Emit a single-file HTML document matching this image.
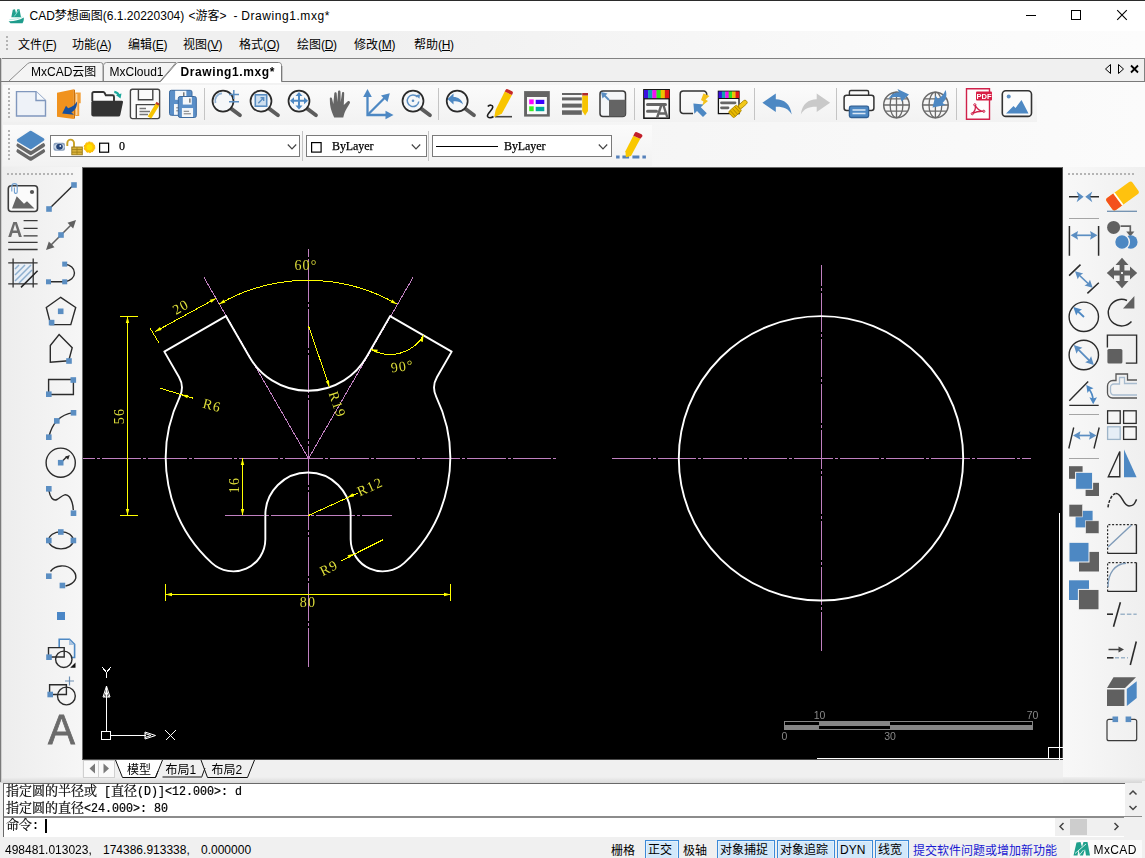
<!DOCTYPE html>
<html lang="zh"><head><meta charset="utf-8"><title>CAD梦想画图</title>
<style>
*{box-sizing:border-box;margin:0;padding:0}
html,body{width:1145px;height:858px;overflow:hidden;background:#f0f0f0}
body{position:relative;font-family:"Liberation Sans","Noto Sans CJK SC",sans-serif;font-size:12px;color:#000}
.abs{position:absolute}
#title{left:0;top:0;width:1145px;height:31px;background:#fff;border-top:1px solid #2b2b2b}
#title .t{left:29.500px;top:7px;font-size:12px;line-height:16px;white-space:nowrap;color:#000}
#title .t i{font-style:normal;letter-spacing:0.56px}
#menu{left:0;top:31px;width:1145px;height:27px;background:linear-gradient(90deg,#f0f0f0 0,#f0f0f0 380px,#fafafa 900px,#fcfcfc 1145px)}
#menu span{position:absolute;top:6px;line-height:16px;font-size:12px;white-space:nowrap}
#menu span b{font-weight:normal;letter-spacing:-0.3px}
#menu u{text-decoration:underline;text-underline-offset:1px}
#tabbar{left:0;top:58px;width:1145px;height:24px;background:#f0f0f0;border-top:1px solid #828282;border-left:1px solid #828282;border-right:1px solid #828282}
#tb1{left:3px;top:85px;width:1034px;height:37px;background:linear-gradient(180deg,#fbfbfb,#f2f2f2)}
#tb2{left:3px;top:125px;width:649px;height:41px;background:linear-gradient(180deg,#fbfbfb,#f2f2f2)}
#toparea{left:0;top:82px;width:1145px;height:86px;background:linear-gradient(90deg,#f0f0f0 0,#f4f4f4 500px,#fbfbfb 1145px)}
#lb{left:0;top:58px;width:2px;height:724px;background:linear-gradient(90deg,#7a7a7a 1px,#cfcfcf 1px)}
#rb{left:1144px;top:58px;width:1px;height:24px;background:#828282}
#left{left:0;top:167px;width:82px;height:612px;background:linear-gradient(90deg,#ededed,#f6f6f6)}
#right{left:1063px;top:167px;width:82px;height:612px;background:linear-gradient(90deg,#f8f8f8,#efefef)}
#canvas{left:82px;top:167px;width:981px;height:593px;background:#000;border:1px solid #4a4a4a;border-left-color:#6a6a6a;border-top-color:#6a6a6a}
#btabs{left:83px;top:760px;width:980px;height:23px;background:linear-gradient(180deg,#f0f0f0 0,#f0f0f0 17px,#d9d9d9 23px)}
#bgrad{left:0;top:777px;width:1145px;height:6px;background:linear-gradient(180deg,#f0f0f0,#d6d6d6)}
#cmd{left:3px;top:783px;width:1142px;height:54px;background:#fff;border-top:1px solid #696969;border-left:1px solid #696969}
#status{left:0;top:837px;width:1145px;height:21px;background:#f0f0f0}
.cad{position:absolute;left:0;top:0}
.sb{position:absolute;top:840px;height:20px;border:1px solid #3c8ad8;background:#d2e8fa;box-shadow:inset 0 0 0 1px #e4f1fc;font-size:12px;line-height:19px;text-align:left;padding-left:2px;white-space:nowrap}
.st.cj{top:842.500px}
.st{position:absolute;top:841.500px;font-size:12px;line-height:17px;white-space:nowrap}
.mono{font-family:"Liberation Mono","Noto Sans CJK SC",monospace;}
.cl{will-change:transform;-webkit-text-stroke:0.2px #000;position:absolute;left:2px;font-size:13px;line-height:17px;height:17px;white-space:pre;font-family:"Liberation Mono","Noto Serif CJK SC",serif;letter-spacing:0}
.cl b{font-weight:normal;font-family:"Liberation Mono",monospace;font-size:11.670px;line-height:17px;display:inline-block;transform:scaleY(1.14);transform-origin:50% 68%}
.combo{position:absolute;height:22px;background:#fff;border:1px solid #7a7a7a}
</style></head>
<body>
<div id="title" class="abs"><div class="t abs">CAD梦想画图(6.1.20220304)</div><div class="t abs" style="left:188.500px">&lt;游客&gt;</div><div class="t abs" style="left:233.500px">-</div><div class="t abs" style="left:241.300px"><i>Drawing1.mxg*</i></div></div>
<div id="menu" class="abs"><span style="left:18px">文件<b>(<u>F</u>)</b></span><span style="left:72px">功能<b>(<u>A</u>)</b></span><span style="left:128px">编辑<b>(<u>E</u>)</b></span><span style="left:183px">视图<b>(<u>V</u>)</b></span><span style="left:239px">格式<b>(<u>O</u>)</b></span><span style="left:297px">绘图<b>(<u>D</u>)</b></span><span style="left:354px">修改<b>(<u>M</u>)</b></span><span style="left:414px">帮助<b>(<u>H</u>)</b></span></div>
<div id="toparea" class="abs"></div>
<div id="tabbar" class="abs"></div>
<div id="tb1" class="abs"></div>
<div id="tb2" class="abs"></div>
<div id="left" class="abs"></div>
<div id="right" class="abs"></div>
<div id="canvas" class="abs"></div>
<div id="bgrad" class="abs"></div>
<div id="btabs" class="abs"></div>
<div id="cmd" class="abs"><div class="cl" style="top:-1px">指定圆的半径或<b> [</b>直径<b>(D)]&lt;12.000&gt;: d</b></div><div class="cl" style="top:15.500px">指定圆的直径<b>&lt;24.000&gt;: 80</b></div><div class="abs" style="left:0;top:32px;width:1139px;height:2px;background:#8c8c8c"></div><div class="cl" style="top:32.500px">命令<b>: </b></div><div class="abs" style="left:41px;top:35px;width:2px;height:14px;background:#000"></div></div>
<div id="status" class="abs"></div>
<div id="lb" class="abs"></div><div id="rb" class="abs"></div>
<div class="st" style="left:5px">498481.013023,</div><div class="st" style="left:103px">174386.913338,</div><div class="st" style="left:201px">0.000000</div>
<div class="st cj" style="left:611px">栅格</div>
<div class="sb" style="left:645px;width:34px">正交</div>
<div class="st cj" style="left:683px">极轴</div>
<div class="sb" style="left:717px;width:58px">对象捕捉</div>
<div class="sb" style="left:777px;width:58px">对象追踪</div>
<div class="sb" style="left:837px;width:36px">DYN</div>
<div class="sb" style="left:875px;width:34px">线宽</div>
<div class="st cj" style="left:913px;color:#1a1ad2">提交软件问题或增加新功能</div>
<svg class="cad" width="1145" height="858" viewBox="0 0 1145 858">
<g fill="none" stroke="#c080c0" stroke-width="1" shape-rendering="crispEdges">
<path d="M83 458.5H558" stroke-dashoffset="26.2" stroke-dasharray="38.6 2 3 2"/>
<path d="M308.5 667V249" stroke-dasharray="38.6 2 3 2"/>
<path d="M225 515.5H392" stroke-dasharray="38.6 2 3 2"/>
<path d="M612 458.5H1030.5" stroke-dasharray="38.6 2 3 2"/>
<path d="M821.5 651V265" stroke-dasharray="38.6 2 3 2"/>
</g>
<g fill="none" stroke="#c080c0" stroke-width="1" shape-rendering="crispEdges">
<path d="M308.5 458.5L204 277.5 M308.5 458.5L413 277.5"/>
</g>
<g fill="none" stroke="#ffffff" stroke-width="1.900" stroke-linejoin="round">
<path d="M249.5 356.98 A67.55 67.55 0 0 0 366.5 356.98 L390.1 316.1 L451.67 351.65 L437.03 377.02 A21.33 21.33 0 0 0 436.26 396.9 A142.2 142.2 0 0 1 404.33 562.9 A32 32 0 0 1 350.66 539.37 L350.66 515.18 A42.66 42.66 0 0 0 265.34 515.18 L265.34 539.37 A32 32 0 0 1 211.67 562.9 A142.2 142.2 0 0 1 179.74 396.9 A21.33 21.33 0 0 0 178.97 377.02 L164.33 351.65 L225.9 316.1 Z"/>
<circle cx="821" cy="458.3" r="142.2"/>
</g>
<g fill="none" stroke="#ffff00" stroke-width="1" shape-rendering="crispEdges">
<path d="M219 304.15 A178 178 0 0 1 397 304.15"/>
<path d="M155 331.7L216.3 298.2"/>
<path d="M150 328L159 343"/>
<path d="M127.5 316V515 M120 316.5H138 M120 515.5H138" shape-rendering="crispEdges"/>
<path d="M242.5 458V515" shape-rendering="crispEdges"/>
<path d="M165 594.5H451 M165.5 584V601 M450.5 584V601" shape-rendering="crispEdges"/>
<path d="M160 388.2L193.5 398.3"/>
<path d="M308.5 326L329.5 387"/>
<path d="M308.5 515.5L358 493"/>
<path d="M383 539.7L341.4 560.7"/>
<path d="M371.1 349.3 A38.4 38.4 0 0 0 423.5 335.2"/>
</g>
<path d="M219 304.15 L223.79 299.43 L225.48 302.38 Z" fill="#ffff00" stroke="none"/>
<path d="M397 304.15 L390.52 302.38 L392.21 299.43 Z" fill="#ffff00" stroke="none"/>
<path d="M155 331.7 L159.87 327.07 L161.51 330.05 Z" fill="#ffff00" stroke="none"/>
<path d="M216.3 298.2 L211.43 302.83 L209.79 299.85 Z" fill="#ffff00" stroke="none"/>
<path d="M127.5 316.5 L129.2 323 L125.8 323 Z" fill="#ffff00" stroke="none"/>
<path d="M127.5 515.5 L125.8 509 L129.2 509 Z" fill="#ffff00" stroke="none"/>
<path d="M242.5 458.5 L244.2 465 L240.8 465 Z" fill="#ffff00" stroke="none"/>
<path d="M242.5 515.5 L240.8 509 L244.2 509 Z" fill="#ffff00" stroke="none"/>
<path d="M165.5 594.5 L172 592.8 L172 596.2 Z" fill="#ffff00" stroke="none"/>
<path d="M450.5 594.5 L444 596.2 L444 592.8 Z" fill="#ffff00" stroke="none"/>
<path d="M181.5 394.7 L188.21 394.95 L187.23 398.21 Z" fill="#ffff00" stroke="none"/>
<path d="M329.5 387 L325.74 381.43 L328.95 380.3 Z" fill="#ffff00" stroke="none"/>
<path d="M347.3 497.6 L352.51 493.36 L353.92 496.46 Z" fill="#ffff00" stroke="none"/>
<path d="M354.1 553.8 L349.06 558.24 L347.53 555.21 Z" fill="#ffff00" stroke="none"/>
<path d="M371.1 349.3 L377.81 349.64 L376.79 352.88 Z" fill="#ffff00" stroke="none"/>
<path d="M423.5 335.2 L422.83 341.88 L419.64 340.7 Z" fill="#ffff00" stroke="none"/>
<text x="306" y="270" font-family="'Liberation Serif',serif" font-size="14" letter-spacing="1.2" fill="#dede3a" text-anchor="middle">60&#176;</text>
<text x="183" y="311" font-family="'Liberation Serif',serif" font-size="14" letter-spacing="1.2" fill="#dede3a" text-anchor="middle" transform="rotate(-30 183 311)">20</text>
<text x="403" y="371" font-family="'Liberation Serif',serif" font-size="14" letter-spacing="1.2" fill="#dede3a" text-anchor="middle" transform="rotate(-8 403 371)">90&#176;</text>
<text x="124" y="416" font-family="'Liberation Serif',serif" font-size="14" letter-spacing="1.2" fill="#dede3a" text-anchor="middle" transform="rotate(-90 124 416)">56</text>
<text x="211" y="410" font-family="'Liberation Serif',serif" font-size="14" letter-spacing="1.2" fill="#dede3a" text-anchor="middle" transform="rotate(15 211 410)">R6</text>
<text x="333" y="406" font-family="'Liberation Serif',serif" font-size="14" letter-spacing="1.2" fill="#dede3a" text-anchor="middle" transform="rotate(71 333 406)">R19</text>
<text x="239" y="485" font-family="'Liberation Serif',serif" font-size="14" letter-spacing="1.2" fill="#dede3a" text-anchor="middle" transform="rotate(-90 239 485)">16</text>
<text x="372" y="491" font-family="'Liberation Serif',serif" font-size="14" letter-spacing="1.2" fill="#dede3a" text-anchor="middle" transform="rotate(-24 372 491)">R12</text>
<text x="331" y="572" font-family="'Liberation Serif',serif" font-size="14" letter-spacing="1.2" fill="#dede3a" text-anchor="middle" transform="rotate(-27 331 572)">R9</text>
<text x="308" y="607" font-family="'Liberation Serif',serif" font-size="14" letter-spacing="1.2" fill="#dede3a" text-anchor="middle">80</text>
<g fill="none" stroke="#ffffff" stroke-width="1" shape-rendering="crispEdges">
<path d="M101.5 731.5h9v8h-9z M106.5 731V686 M110 735.5H146"/>
<path d="M102.500 667.5L106.5 672.5L110.500 667.5 M106.5 672.500V678"/>
<path d="M165.5 730.5L175.5 740.5 M175.5 730.5L165.5 740.5"/>
</g>
<g fill="none" stroke="#ffffff" stroke-width="1">
<path d="M106.5 686L103 697H110Z M106.5 690L104.500 697 M106.5 690L108.500 697"/>
<path d="M155.5 735.5L145 732V739Z M151 735.5L145 733.5 M151 735.5L145 737.5"/>
</g>
<g shape-rendering="crispEdges">
<rect x="784.5" y="721.5" width="248" height="8" fill="none" stroke="#858585"/>
<rect x="784" y="725" width="35" height="5" fill="#858585"/>
<rect x="819" y="721" width="71" height="5" fill="#858585"/>
<rect x="890" y="725" width="143" height="5" fill="#858585"/>
</g>
<text x="819.5" y="718.5" font-family="'Liberation Sans',sans-serif" font-size="10.500" fill="#888888" text-anchor="middle">10</text>
<text x="1032.5" y="718.5" font-family="'Liberation Sans',sans-serif" font-size="10.500" fill="#888888" text-anchor="middle">70</text>
<text x="784.5" y="740" font-family="'Liberation Sans',sans-serif" font-size="10.500" fill="#888888" text-anchor="middle">0</text>
<text x="890" y="740" font-family="'Liberation Sans',sans-serif" font-size="10.500" fill="#888888" text-anchor="middle">30</text>
<g fill="none" stroke="#ffffff" stroke-width="1" shape-rendering="crispEdges">
<path d="M1059.5 513V760 M817 758.5H1063 M1048.500 758V747.500H1063"/>
</g>
</svg>
<style>.ic{position:absolute;overflow:visible}.sep{position:absolute;background:#a5a5a5}.grip{position:absolute;height:2px;background-image:linear-gradient(90deg,#b4b4b4 2px,transparent 2px);background-size:4px 2px}.gripv{position:absolute;width:2px;background-image:linear-gradient(180deg,#b4b4b4 2px,transparent 2px);background-size:2px 4px}</style>
<svg class="ic" style="left:45px;top:181px" width="32" height="32" viewBox="0 0 32 32"><path d="M4 28L29 3.5" fill="none" stroke="#2b2b2b" stroke-width="1.4" /><rect x="26.2" y="1.2" width="5.6" height="5.6" fill="#5b8ec2"/><rect x="1.2" y="25.2" width="5.6" height="5.6" fill="#5b8ec2"/></svg>
<svg class="ic" style="left:45px;top:219px" width="32" height="32" viewBox="0 0 32 32"><path d="M6 26L26 6" fill="none" stroke="#606060" stroke-width="1.6" /><path d="M31.00 1.00L28.17 9.49L25.34 6.66L22.51 3.83Z" fill="#606060"/><path d="M1.00 31.00L3.83 22.51L6.66 25.34L9.49 28.17Z" fill="#606060"/><rect x="13.2" y="13.2" width="5.6" height="5.6" fill="#5b8ec2"/></svg>
<svg class="ic" style="left:45px;top:257px" width="32" height="32" viewBox="0 0 32 32"><path d="M3 24.7H20A10.600 8.800 0 0 0 20 7.200" fill="none" stroke="#2b2b2b" stroke-width="1.4" /><rect x="17.2" y="4.6" width="5" height="5" fill="#5b8ec2"/><rect x="1" y="22.3" width="5" height="5" fill="#5b8ec2"/><rect x="17.2" y="22.3" width="5" height="5" fill="#5b8ec2"/></svg>
<svg class="ic" style="left:45px;top:295px" width="32" height="32" viewBox="0 0 32 32"><path d="M15.7 2.3L30.7 12.5L25.8 29.6H5.7L1.3 12.5Z" fill="none" stroke="#2b2b2b" stroke-width="1.4" /><rect x="12.899999999999999" y="13.5" width="5.6" height="5.6" fill="#5b8ec2"/><rect x="3.8000000000000003" y="24.8" width="5.6" height="5.6" fill="#5b8ec2"/></svg>
<svg class="ic" style="left:45px;top:333px" width="32" height="32" viewBox="0 0 32 32"><path d="M14.1 1.6L27.2 14.7L23.7 27.8L5.3 29.2V12.6Z" fill="none" stroke="#2b2b2b" stroke-width="1.4" /><rect x="21.2" y="25.2" width="5.6" height="5.6" fill="#5b8ec2"/></svg>
<svg class="ic" style="left:45px;top:371px" width="32" height="32" viewBox="0 0 32 32"><path d="M3.6 8.5H28.4V23.5H3.6Z" fill="none" stroke="#2b2b2b" stroke-width="1.4" /><rect x="25.5" y="6.2" width="5.6" height="5.6" fill="#5b8ec2"/><rect x="1.0" y="20.4" width="5.6" height="5.6" fill="#5b8ec2"/></svg>
<svg class="ic" style="left:45px;top:409px" width="32" height="32" viewBox="0 0 32 32"><path d="M28.3 3.6C16 5.5 7 14 3.9 28" fill="none" stroke="#2b2b2b" stroke-width="1.4" /><rect x="25.7" y="1.0" width="5.6" height="5.6" fill="#5b8ec2"/><rect x="9.0" y="9.1" width="5.6" height="5.6" fill="#5b8ec2"/><rect x="1.0" y="25.4" width="5.6" height="5.6" fill="#5b8ec2"/></svg>
<svg class="ic" style="left:45px;top:447px" width="32" height="32" viewBox="0 0 32 32"><circle cx="15.7" cy="15.7" r="14.6" fill="none" stroke="#2b2b2b" stroke-width="1.4"/><path d="M16 15.5L22 9.5" fill="none" stroke="#2b2b2b" stroke-width="1.4" /><path d="M24.80 8.00L23.17 12.74L21.62 11.18L20.06 9.63Z" fill="#2b2b2b"/><rect x="12.899999999999999" y="12.899999999999999" width="5.6" height="5.6" fill="#5b8ec2"/></svg>
<svg class="ic" style="left:45px;top:485px" width="32" height="32" viewBox="0 0 32 32"><path d="M4 6C5 12 8 16.5 12 14.5S20 6.5 24.5 12Q28 17 28.3 25" fill="none" stroke="#2b2b2b" stroke-width="1.4" /><rect x="1.0" y="1.0" width="5.6" height="5.6" fill="#5b8ec2"/><rect x="25.7" y="25.4" width="5.6" height="5.6" fill="#5b8ec2"/></svg>
<svg class="ic" style="left:45px;top:523px" width="32" height="32" viewBox="0 0 32 32"><ellipse cx="16" cy="17.3" rx="12.3" ry="8.6" fill="none" stroke="#2b2b2b" stroke-width="1.4"/><rect x="13.0" y="6.2" width="5.6" height="5.6" fill="#5b8ec2"/><rect x="1.0" y="14.7" width="5.6" height="5.6" fill="#5b8ec2"/><rect x="25.599999999999998" y="14.7" width="5.6" height="5.6" fill="#5b8ec2"/></svg>
<svg class="ic" style="left:45px;top:561px" width="32" height="32" viewBox="0 0 32 32"><path d="M5.5 10.5C10 3.5 22 3 28 9.500S30 23 20.5 25" fill="none" stroke="#2b2b2b" stroke-width="1.4" /><rect x="1.0" y="12.399999999999999" width="5.6" height="5.6" fill="#5b8ec2"/><rect x="14.6" y="21.7" width="5.6" height="5.6" fill="#5b8ec2"/></svg>
<svg class="ic" style="left:45px;top:599px" width="32" height="32" viewBox="0 0 32 32"><rect x="12" y="13" width="8" height="8" fill="#4a86c6"/></svg>
<svg class="ic" style="left:45px;top:637px" width="32" height="32" viewBox="0 0 32 32"><path d="M14.2 10V2.3H24.5L29.6 7.4V20.5H27" fill="none" stroke="#4d88c3" stroke-width="1.6" /><path d="M24 2.3V8H29.6Z" fill="#a9c4e0" /><path d="M3.5 10.6H19.2V20H3.5Z" fill="none" stroke="#2b2b2b" stroke-width="1.4" /><circle cx="18.8" cy="22.3" r="8.2" fill="none" stroke="#2b2b2b" stroke-width="1.4"/><rect x="1.2" y="17.4" width="5.6" height="5.6" fill="#5b8ec2"/><path d="M30.5 25.4V30.7H25.2Z" fill="#111" /></svg>
<svg class="ic" style="left:45px;top:675px" width="32" height="32" viewBox="0 0 32 32"><path d="M4.6 9.8H21.4V19.5H4.6Z" fill="none" stroke="#2b2b2b" stroke-width="1.4" /><circle cx="21.4" cy="21" r="8.9" fill="none" stroke="#2b2b2b" stroke-width="1.4"/><rect x="2.4000000000000004" y="16.7" width="5.6" height="5.6" fill="#5b8ec2"/><path d="M24.5 1.500V10.5M20 6H29" fill="none" stroke="#6d8fb3" stroke-width="1.2" /></svg>
<svg class="ic" style="left:45px;top:713px" width="32" height="32" viewBox="0 0 32 32"><text x="16.500" y="30.600" text-anchor="middle" font-family="'Liberation Sans',sans-serif" font-size="42.500" fill="#6b6b6b" stroke="#6b6b6b" stroke-width="0.8" transform="translate(16.500 0) scale(0.950 1) translate(-16.500 0)">A</text></svg>
<svg class="ic" style="left:7px;top:181px" width="32" height="32" viewBox="0 0 32 32"><rect x="1.3" y="4.7" width="29.2" height="25.8" rx="3" fill="#fbfbfb" stroke="#3c3c3c" stroke-width="1.600"/><path d="M5 27.500L9.700 15.300L17 22.700L20 20.300L27.500 27.500Z" fill="#666" /><circle cx="25" cy="11" r="2.1" fill="#555"/><path d="M4.800 10.500V5.300a2.700 2.700 0 0 1 5.400 0V11a1.400 1.400 0 0 1-2.800 0V6.500" fill="none" stroke="#6f9fd0" stroke-width="1.1" /></svg>
<svg class="ic" style="left:7px;top:219px" width="32" height="32" viewBox="0 0 32 32"><text x="8.100" y="18.200" text-anchor="middle" font-family="'Liberation Sans',sans-serif" font-size="22.500" font-weight="bold" fill="#6b6b6b" transform="translate(8.100 0) scale(0.900 1) translate(-8.100 0)">A</text><path d="M16.6 1.7H30.6M16.6 9.3H30.6M16.6 16.8H30.6M1.2 23.4H30.6M1.2 30.500H30.6" fill="none" stroke="#3a3a3a" stroke-width="1.3" /></svg>
<svg class="ic" style="left:7px;top:257px" width="32" height="32" viewBox="0 0 32 32"><rect x="6.1" y="5.900" width="20" height="21" fill="#e9eff6"/><path d="M8 18L18 8M8 24L24 8M12 26L25 13M8 12L12 8" fill="none" stroke="#8fb0cf" stroke-width="1.5" /><path d="M6.1 1.5V30.4M26.2 1.500V30.4M1.2 5.9H30.6M1.2 26.9H30.6" fill="none" stroke="#333" stroke-width="1.3" /><path d="M14 30.4L30.6 13.8" fill="none" stroke="#222" stroke-width="1.5" /></svg>
<svg class="ic" style="left:1068px;top:181px" width="32" height="32" viewBox="0 0 32 32"><path d="M1 15.800H11M22 15.800H31" fill="none" stroke="#2b2b2b" stroke-width="1.6" /><path d="M15.60 15.80L8.60 21.20L10.60 15.80L8.60 10.40Z" fill="#5b8ec2"/><path d="M17.30 15.80L24.30 10.40L22.30 15.80L24.30 21.20Z" fill="#5b8ec2"/></svg>
<svg class="ic" style="left:1068px;top:225px" width="32" height="32" viewBox="0 0 32 32"><path d="M1.4 1V30.700M30.600 1V30.700" fill="none" stroke="#2b2b2b" stroke-width="1.5" /><path d="M5.60 10.30L26.50 10.30" fill="none" stroke="#5b8ec2" stroke-width="1.7" /><path d="M2.60 10.30L10.10 5.90L8.90 10.30L10.10 14.70Z" fill="#5b8ec2"/><path d="M29.50 10.30L22.00 14.70L23.20 10.30L22.00 5.90Z" fill="#5b8ec2"/></svg>
<svg class="ic" style="left:1068px;top:263px" width="32" height="32" viewBox="0 0 32 32"><path d="M1.1 12.600L12.500 1.600M19.400 30.400L30.800 19.700" fill="none" stroke="#2b2b2b" stroke-width="1.5" /><path d="M9.19 10.25L22.51 22.75" fill="none" stroke="#5b8ec2" stroke-width="1.7" /><path d="M7.00 8.20L15.21 10.41L11.60 12.51L9.73 16.25Z" fill="#5b8ec2"/><path d="M24.70 24.80L16.49 22.59L20.10 20.49L21.97 16.75Z" fill="#5b8ec2"/></svg>
<svg class="ic" style="left:1068px;top:301px" width="32" height="32" viewBox="0 0 32 32"><circle cx="15.8" cy="15.8" r="14.7" fill="none" stroke="#2b2b2b" stroke-width="1.4"/><path d="M16 16L9 9.5" fill="none" stroke="#4d88c3" stroke-width="1.8" /><path d="M5.30 6.00L13.99 8.46L10.23 10.68L8.21 14.55Z" fill="#4d88c3"/></svg>
<svg class="ic" style="left:1068px;top:339px" width="32" height="32" viewBox="0 0 32 32"><circle cx="15.8" cy="16" r="14.7" fill="none" stroke="#2b2b2b" stroke-width="1.4"/><path d="M7.92 8.12L23.68 23.88" fill="none" stroke="#5b8ec2" stroke-width="1.8" /><path d="M5.80 6.00L14.43 8.69L10.61 10.81L8.49 14.63Z" fill="#5b8ec2"/><path d="M25.80 26.00L17.17 23.31L20.99 21.19L23.11 17.37Z" fill="#5b8ec2"/></svg>
<svg class="ic" style="left:1068px;top:377px" width="32" height="32" viewBox="0 0 32 32"><path d="M1.3 23.7L20.2 4.4M1.3 28.4H30.7" fill="none" stroke="#2b2b2b" stroke-width="1.4" /><path d="M20.5 11.5Q25 17 25 23" fill="none" stroke="#4d88c3" stroke-width="1.7" /><path d="M18.30 8.00L25.54 11.32L21.78 12.64L19.46 15.88Z" fill="#4d88c3"/><path d="M25.20 27.30L21.40 20.30L25.20 21.50L29.00 20.30Z" fill="#4d88c3"/></svg>
<svg class="ic" style="left:1068px;top:421px" width="32" height="32" viewBox="0 0 32 32"><path d="M0.8 27.5L5.7 6.5M26 27.5L31.2 6.5" fill="none" stroke="#2b2b2b" stroke-width="1.4" /><path d="M8.00 14.50L25.50 14.50" fill="none" stroke="#5b8ec2" stroke-width="1.7" /><path d="M5.00 14.50L12.50 10.30L11.30 14.50L12.50 18.70Z" fill="#5b8ec2"/><path d="M28.50 14.50L21.00 18.70L22.20 14.50L21.00 10.30Z" fill="#5b8ec2"/></svg>
<svg class="ic" style="left:1068px;top:465px" width="32" height="32" viewBox="0 0 32 32"><path d="M1 1.2H14.6V13.800H1Z" fill="#606060" /><path d="M17.6 17.800H31V31H17.6Z" fill="#606060" /><rect x="7.6" y="7.3" width="17" height="17" fill="#4d88c3" stroke="#f4f4f4" stroke-width="1"/></svg>
<svg class="ic" style="left:1068px;top:503px" width="32" height="32" viewBox="0 0 32 32"><rect x="7.6" y="7.8" width="17" height="16.600" fill="#4d88c3"/><rect x="1" y="1.3" width="13.6" height="12.6" fill="#606060" stroke="#f4f4f4" stroke-width="0.6"/><rect x="17.6" y="17.8" width="13.4" height="12.700" fill="#606060" stroke="#f4f4f4" stroke-width="0.6"/></svg>
<svg class="ic" style="left:1068px;top:541px" width="32" height="32" viewBox="0 0 32 32"><path d="M11 10.9H31V30.500H11Z" fill="#606060" /><rect x="1" y="1.3" width="20" height="19.7" fill="#4d88c3" stroke="#f4f4f4" stroke-width="1"/></svg>
<svg class="ic" style="left:1068px;top:579px" width="32" height="32" viewBox="0 0 32 32"><path d="M1 1.3H21V21H1Z" fill="#4d88c3" /><rect x="10.4" y="10.4" width="20.6" height="20.4" fill="#606060" stroke="#f4f4f4" stroke-width="1"/></svg>
<svg class="ic" style="left:1106px;top:181px" width="32" height="32" viewBox="0 0 32 32"><g transform="rotate(-36 16.500 15)"><rect x="0.500" y="7.500" width="32" height="15" rx="2.800" fill="#ffc20e"/><path d="M0.500 10.300a2.800 2.800 0 0 1 2.800-2.800H10.500V22.500H3.300a2.800 2.800 0 0 1-2.800-2.800Z" fill="#f4511e"/><rect x="10.500" y="7.500" width="1.800" height="15" fill="#fff"/></g><path d="M1 30.3H31" fill="none" stroke="#6f8fae" stroke-width="1.3" /></svg>
<svg class="ic" style="left:1106px;top:219px" width="32" height="32" viewBox="0 0 32 32"><circle cx="7.6" cy="8.4" r="6.5" fill="#606060"/><path d="M14.5 7.2H24.3V13" fill="none" stroke="#606060" stroke-width="1.7" /><path d="M20.2 12.5H28.400L24.3 17.6Z" fill="#606060" /><circle cx="24.800" cy="23" r="6.800" fill="#4d88c3"/><circle cx="16" cy="23" r="7.400" fill="#4d88c3" stroke="#f4f4f4" stroke-width="1.400"/></svg>
<svg class="ic" style="left:1106px;top:257px" width="32" height="32" viewBox="0 0 32 32"><path d="M16 0.800L22.500 8H18.400V13.600H24V9.500L31.200 16L24 22.500V18.400H18.400V24H22.500L16 31.200L9.500 24H13.600V18.400H8V22.500L0.800 16L8 9.500V13.600H13.600V8H9.500Z" fill="#606060" /><rect x="15" y="15" width="2" height="2" fill="#e8e8e8"/></svg>
<svg class="ic" style="left:1106px;top:295px" width="32" height="32" viewBox="0 0 32 32"><path d="M21 5.500A13.300 13.300 0 1 0 25.500 26.500" fill="none" stroke="#2b2b2b" stroke-width="1.4" /><path d="M28.4 1V13.500H17Z" fill="#606060" /></svg>
<svg class="ic" style="left:1106px;top:333px" width="32" height="32" viewBox="0 0 32 32"><path d="M1.4 14.5V2.1H30.6V30.1H19.800" fill="none" stroke="#2b2b2b" stroke-width="1.4" /><rect x="1.4" y="16.100" width="15" height="14.400" rx="1.5" fill="#606060"/></svg>
<svg class="ic" style="left:1106px;top:371px" width="32" height="32" viewBox="0 0 32 32"><path d="M31 9H21.500V3H10V9.500H7A5.500 5.500 0 0 0 1.5 15V22A5 5 0 0 0 6.500 27H31" fill="none" stroke="#555" stroke-width="1.3" /><path d="M31 12.5H18.5V6.5H13.500V13H8A3.500 3.500 0 0 0 4.5 16.500V20.500A3.500 3.500 0 0 0 8 24H31" fill="none" stroke="#a8bccf" stroke-width="1.3" /></svg>
<svg class="ic" style="left:1106px;top:409px" width="32" height="32" viewBox="0 0 32 32"><rect x="1.6" y="1.8" width="12.600" height="12.600" fill="#f6f6f6" stroke="#2b2b2b" stroke-width="1.300"/><rect x="17.600" y="1.8" width="12.600" height="12.600" fill="#f6f6f6" stroke="#2b2b2b" stroke-width="1.300"/><rect x="1.6" y="17.800" width="12.600" height="12.600" fill="#e6eef6" stroke="#9db4c8" stroke-width="1.300"/><rect x="17.600" y="17.800" width="12.600" height="12.600" fill="#f6f6f6" stroke="#2b2b2b" stroke-width="1.300"/></svg>
<svg class="ic" style="left:1106px;top:447px" width="32" height="32" viewBox="0 0 32 32"><path d="M2.3 29.700H13.800V4.5Z" fill="none" stroke="#2b2b2b" stroke-width="1.4" /><path d="M18 2.600V30.2H30.6Z" fill="#4d88c3" /></svg>
<svg class="ic" style="left:1106px;top:485px" width="32" height="32" viewBox="0 0 32 32"><path d="M2 22.3C3 15 6 9 10 8.500" fill="none" stroke="#2b2b2b" stroke-width="1.5" stroke-dasharray="3 1.5"/><path d="M10 8.500C16 8 17 21 23 21S29 17 30.6 14.4" fill="none" stroke="#2b2b2b" stroke-width="1.5" /></svg>
<svg class="ic" style="left:1106px;top:523px" width="32" height="32" viewBox="0 0 32 32"><path d="M1.6 30.400V1.600H30.400" fill="none" stroke="#2b2b2b" stroke-width="1.2" stroke-dasharray="2 1.700"/><path d="M30.400 1.600V30.400H1.600" fill="none" stroke="#2b2b2b" stroke-width="1.4" /><path d="M2 24L25.500 2" fill="none" stroke="#7f9bb8" stroke-width="1.4" /></svg>
<svg class="ic" style="left:1106px;top:561px" width="32" height="32" viewBox="0 0 32 32"><path d="M1.6 30.400V1.600H30.400" fill="none" stroke="#2b2b2b" stroke-width="1.2" stroke-dasharray="2 1.700"/><path d="M30.400 1.600V30.400H1.600" fill="none" stroke="#2b2b2b" stroke-width="1.4" /><path d="M2 26C2 12 9 3 20 2.300" fill="none" stroke="#7f9bb8" stroke-width="1.4" /></svg>
<svg class="ic" style="left:1106px;top:599px" width="32" height="32" viewBox="0 0 32 32"><path d="M7.500 27.700L14.400 3.300" fill="none" stroke="#2b2b2b" stroke-width="1.6" /><path d="M1 15.200H7" fill="none" stroke="#2b2b2b" stroke-width="1.6" /><path d="M14.400 15.200H30.700" fill="none" stroke="#9db4c8" stroke-width="1.6" stroke-dasharray="4.500 2"/></svg>
<svg class="ic" style="left:1106px;top:637px" width="32" height="32" viewBox="0 0 32 32"><path d="M24.300 28L30.300 4.500" fill="none" stroke="#2b2b2b" stroke-width="1.6" /><path d="M2.500 12.500H14" fill="none" stroke="#444" stroke-width="1.5" /><path d="M12.500 9.500L18 12.500L12.500 15.500Z" fill="#444" /><path d="M1 20.800H7.500" fill="none" stroke="#2b2b2b" stroke-width="1.6" /><path d="M9 20.800H22" fill="none" stroke="#9db4c8" stroke-width="1.6" stroke-dasharray="4 2"/></svg>
<svg class="ic" style="left:1106px;top:675px" width="32" height="32" viewBox="0 0 32 32"><path d="M1 13.100L7.500 2.200H30L19 13.100Z" fill="#606060" /><path d="M1 14.500H18.400V31H1Z" fill="#606060" /><path d="M20.800 14.100L30.700 6.200V23L20.800 31Z" fill="#4d88c3" /></svg>
<svg class="ic" style="left:1106px;top:713px" width="32" height="32" viewBox="0 0 32 32"><path d="M7 6.300H3A2 2 0 0 0 1 8.300V25.700A2 2 0 0 0 3 27.700H28.700A2 2 0 0 0 30.700 25.700V8.300A2 2 0 0 0 28.700 6.300H25" fill="none" stroke="#3a3a3a" stroke-width="1.2" /><rect x="6.5" y="3.5" width="5.6" height="5.6" fill="#5b8ec2"/><rect x="19.6" y="3.5" width="5.6" height="5.6" fill="#5b8ec2"/></svg>
<div class="sep" style="left:1069px;top:218px;width:30px;height:1px"></div>
<div class="sep" style="left:1069px;top:414px;width:30px;height:1px"></div>
<div class="sep" style="left:1069px;top:458px;width:30px;height:1px"></div>
<div class="grip" style="left:7px;top:173px;width:67px"></div>
<div class="grip" style="left:1068px;top:173px;width:67px"></div>
<svg class="ic" style="left:15px;top:87px" width="32" height="32" viewBox="0 0 32 32"><path d="M1.5 4.600H21L30.500 13.500V29H1.500Z" fill="#eef2f8" stroke="#8097bd" stroke-width="1.400"/><path d="M21 4.600V13.500H30.500" fill="#f6f9fc" stroke="#8097bd" stroke-width="1.400"/></svg>
<svg class="ic" style="left:53px;top:87px" width="32" height="32" viewBox="0 0 32 32"><path d="M4 5.700L20.800 2.200V32L4 29.800Z" fill="#f0921e" /><path d="M20.800 2.200L22 3V31.200L20.800 32Z" fill="#c8700e" /><path d="M22.200 5.400H27.700V16.200H26.200V29H22.200Z" fill="#f2a03a" /><path d="M23.200 7H24.300V28H23.200Z" fill="#fbe3c0" /><path d="M9.200 26.400L13 18.700L15.200 21.200C19.500 19.800 22.500 17.500 23.900 14.500C24.500 19 22.300 23.500 18.300 25.300L21 27.700Z" fill="#17509e" /></svg>
<svg class="ic" style="left:91px;top:87px" width="32" height="32" viewBox="0 0 32 32"><path d="M1.300 14V6.500A1.500 1.500 0 0 1 2.800 5H12.300A1.500 1.500 0 0 1 13.500 5.800L14.800 8.200H21.500A1.500 1.500 0 0 1 23 9.700V14" fill="#fbfbfb" stroke="#333" stroke-width="1.900"/><path d="M0.300 15.300A1.500 1.500 0 0 1 1.800 13.800H30.800A1.200 1.200 0 0 1 32 15.300L29.300 28A2 2 0 0 1 27.300 29.500H2.300A2 2 0 0 1 0.300 27.500Z" fill="#333" /><path d="M23.300 4.800Q27.500 5.500 27.800 9" fill="none" stroke="#1aa89c" stroke-width="2.2" /><path d="M24.800 8L30.500 6.500L29.500 11.500Z" fill="#1aa89c" /></svg>
<svg class="ic" style="left:129px;top:87px" width="32" height="32" viewBox="0 0 32 32"><rect x="1.400" y="2.300" width="29.200" height="29.300" rx="2" fill="#fbfbfb" stroke="#444" stroke-width="1.400"/><path d="M9.400 2.300V12.800H23.800V2.300" fill="none" stroke="#444" stroke-width="1.4" /><path d="M7.300 31.600V17.600H30.600" fill="none" stroke="#444" stroke-width="1.4" /><path d="M10.500 21.500H17M10.500 24.500H21M10.500 27.500H19" fill="none" stroke="#777" stroke-width="1.7" /><path d="M20.500 30.500L28.500 17.500" fill="none" stroke="#f7c400" stroke-width="4.2" /><path d="M27.500 14.800L30.600 16.700L29.500 18.600L26.400 16.700Z" fill="#c0392b" /></svg>
<svg class="ic" style="left:167px;top:87px" width="32" height="32" viewBox="0 0 32 32"><rect x="2.5" y="3.3" width="22.5" height="25" rx="1.800" fill="#5b8fc8" stroke="#3d6a9e" stroke-width="1"/><rect x="8.125" y="3.8" width="11.25" height="9.0" fill="#f4f7fa"/><rect x="16.0" y="5.3" width="1.500" height="5.0" fill="#777"/><rect x="7.0" y="17.05" width="13.95" height="10.75" fill="#f4f7fa"/><rect x="9.25" y="20.3" width="6.75" height="1" fill="#777"/><rect x="9.25" y="23.3" width="9.0" height="1" fill="#777"/><rect x="11.3" y="9.5" width="18" height="21" rx="1.800" fill="#5b8fc8" stroke="#3d6a9e" stroke-width="1"/><rect x="15.8" y="10.0" width="9.0" height="7.56" fill="#f4f7fa"/><rect x="22.1" y="11.5" width="1.500" height="4.2" fill="#777"/><rect x="14.9" y="21.05" width="11.16" height="8.950000000000001" fill="#f4f7fa"/><rect x="16.7" y="23.78" width="5.3999999999999995" height="1" fill="#777"/><rect x="16.7" y="26.3" width="7.2" height="1" fill="#777"/></svg>
<svg class="ic" style="left:210px;top:87px" width="32" height="32" viewBox="0 0 32 32"><path d="M20.8 21.4L30 28.200" fill="none" stroke="#5c5c5c" stroke-width="3.8" stroke-linecap="round"/><circle cx="13" cy="14.1" r="10.5" fill="#f5f7f9" stroke="#2a2a2a" stroke-width="1.700"/><path d="M5.500 16A7.500 7.500 0 0 1 12 6.300" fill="none" stroke="#8fb2d6" stroke-width="1.8" /><path d="M23.800 3V12M19 7.500H29M19 14.700H29" fill="none" stroke="#5b8ec2" stroke-width="1.5" /></svg>
<svg class="ic" style="left:248px;top:87px" width="32" height="32" viewBox="0 0 32 32"><path d="M20.8 21.4L30 28.200" fill="none" stroke="#5c5c5c" stroke-width="3.8" stroke-linecap="round"/><circle cx="13" cy="14.1" r="10.5" fill="#f5f7f9" stroke="#2a2a2a" stroke-width="1.700"/><rect x="7.300" y="7.800" width="11.400" height="11.400" fill="#cfe0f0" stroke="#5b8ec2" stroke-width="1.600"/><path d="M10.300 16.300L15.700 10.800M12.500 10.800H15.700V14" fill="none" stroke="#5b8ec2" stroke-width="1.4" /></svg>
<svg class="ic" style="left:286px;top:87px" width="32" height="32" viewBox="0 0 32 32"><path d="M20.8 21.4L30 28.200" fill="none" stroke="#5c5c5c" stroke-width="3.8" stroke-linecap="round"/><circle cx="13" cy="14.1" r="10.5" fill="#f5f7f9" stroke="#2a2a2a" stroke-width="1.700"/><path d="M13 5L16.500 9H14V12.800H18V10.300L22 13.800L18 17.300V14.800H14V18.600H16.500L13 22.600L9.500 18.600H12V14.800H8V17.300L4 13.800L8 10.300V12.800H12V9H9.500Z" fill="#4d88c3" /></svg>
<svg class="ic" style="left:324px;top:87px" width="32" height="32" viewBox="0 0 32 32"><path d="M10.200 30.500C8.500 27 6.500 22 6 17L5.800 11.500C5.800 10 7.800 10 8 11.500L9.300 17L10.300 6.500C10.400 4.800 12.600 4.800 12.700 6.500L13.300 15L14 4.700C14.100 3 16.400 3 16.500 4.700L16.700 15L18 6C18.200 4.400 20.300 4.600 20.200 6.200L19.800 18L23.500 14.500C24.800 13.300 26.800 14.500 25.800 16.200C24 19.500 21.500 23 20.500 26C20 27.500 19.500 29.500 19.300 30.500Z" fill="#666" /></svg>
<svg class="ic" style="left:362px;top:87px" width="32" height="32" viewBox="0 0 32 32"><path d="M5.500 8V28H25" fill="none" stroke="#4d88c3" stroke-width="2.3" /><path d="M6 27.500L23 10.500" fill="none" stroke="#4d88c3" stroke-width="2.3" /><path d="M5.500 2L9.800 10H1.200Z" fill="#4d88c3" /><path d="M31.500 28L23.500 32.300V23.700Z" fill="#4d88c3" /><path d="M27.800 6.200L25.500 15L19 8.500Z" fill="#4d88c3" /></svg>
<svg class="ic" style="left:400px;top:87px" width="32" height="32" viewBox="0 0 32 32"><path d="M20.8 21.4L30 28.200" fill="none" stroke="#5c5c5c" stroke-width="3.8" stroke-linecap="round"/><circle cx="13" cy="14.1" r="10.5" fill="#f5f7f9" stroke="#2a2a2a" stroke-width="1.700"/><path d="M17.500 10A5.800 5.800 0 1 0 18.800 14.500" fill="none" stroke="#5b8ec2" stroke-width="1.5" /><path d="M15.500 8.300L20 7.300L19.500 11.800Z" fill="#5b8ec2" /><circle cx="13" cy="13.800" r="1.300" fill="#5b8ec2"/></svg>
<svg class="ic" style="left:444px;top:87px" width="32" height="32" viewBox="0 0 32 32"><path d="M21.0 21.4L30 28.200" fill="none" stroke="#5c5c5c" stroke-width="3.8" stroke-linecap="round"/><circle cx="13.2" cy="14.1" r="10.5" fill="#f5f7f9" stroke="#2a2a2a" stroke-width="1.700"/><path d="M3.500 12L9.500 6.500V10C14 10 18 12.500 19 17.500C16.500 14.500 13 14 9.500 14.300V17.500Z" fill="#4d88c3" /></svg>
<svg class="ic" style="left:482px;top:87px" width="32" height="32" viewBox="0 0 32 32"><path d="M5.800 19.500C7.500 17.500 10.800 17.800 10.800 20C10.800 23 4.800 26.500 5.500 29.300C6.200 31.300 9.500 31 11.500 29.500" fill="none" stroke="#1a1a1a" stroke-width="1.6" /><path d="M13 29.700H30" fill="none" stroke="#444" stroke-width="1.6" /><path d="M12.200 30.200L13.600 22.900L22.700 4.600L30 8L19.800 26.700Z" fill="#f9c500" /><path d="M22.700 4.600L23.600 2.900A1.600 1.600 0 0 1 25.700 2.200L30 4.300A1.600 1.600 0 0 1 30.700 6.400L30 8Z" fill="#c62828" /></svg>
<svg class="ic" style="left:520px;top:87px" width="32" height="32" viewBox="0 0 32 32"><rect x="4.100" y="4.100" width="25.700" height="25.500" fill="#646464"/><rect x="7" y="10" width="19.900" height="17.200" fill="#fafafa"/><rect x="9.200" y="12.400" width="4.500" height="4.800" fill="#ff00ff"/><rect x="15.700" y="12.800" width="8.600" height="4.200" fill="#3a00ff"/><rect x="9.200" y="19.300" width="4.500" height="4.900" fill="#3cf01e"/><rect x="15.700" y="19.800" width="8.600" height="4.400" fill="#00a8a0"/></svg>
<svg class="ic" style="left:558px;top:87px" width="32" height="32" viewBox="0 0 32 32"><rect x="4" y="6" width="19.800" height="2" fill="#646464"/><rect x="4" y="10.400" width="19.800" height="3" fill="#646464"/><rect x="4" y="16.600" width="19.800" height="4" fill="#646464"/><rect x="4" y="23.300" width="19.800" height="4.500" fill="#646464"/><path d="M24.200 8.500H30V24L27.100 28.500L24.200 24Z" fill="#f7c400"/><rect x="24.200" y="6" width="5.800" height="2.500" fill="#b02a2a"/></svg>
<svg class="ic" style="left:596px;top:87px" width="32" height="32" viewBox="0 0 32 32"><rect x="4" y="4" width="25.500" height="25.500" rx="3" fill="#f4f6f8" stroke="#3a3a3a" stroke-width="1.500"/><path d="M13 12.800H29.500V26.500A3 3 0 0 1 26.500 29.500H13Z" fill="#646464" /><path d="M13 13L8 8" fill="none" stroke="#5b8ec2" stroke-width="1.8" /><path d="M5 5L11.500 6.500L6.500 11.500Z" fill="#5b8ec2" /></svg>
<svg class="ic" style="left:640px;top:87px" width="32" height="32" viewBox="0 0 32 32"><rect x="3.900" y="2.800" width="25.300" height="28.400" fill="#fbfbfb" stroke="#111" stroke-width="1.500"/><rect x="4.00" y="3" width="4.47" height="8.8" fill="#3a10e0"/><rect x="8.17" y="3" width="4.47" height="8.8" fill="#10a0b0"/><rect x="12.33" y="3" width="4.47" height="8.8" fill="#f010f0"/><rect x="16.50" y="3" width="4.47" height="8.8" fill="#30e020"/><rect x="20.67" y="3" width="4.47" height="8.8" fill="#f0c000"/><rect x="24.83" y="3" width="4.47" height="8.8" fill="#e01818"/><path d="M3.900 11.800H29.200" fill="none" stroke="#111" stroke-width="1.2" /><path d="M7.500 17.500H25.500M7.500 24.300H16.500" fill="none" stroke="#666" stroke-width="3" stroke-linecap="round"/><path d="M17 31L21.500 17.500H23.200L27.500 31M19.500 26.500H25.500" fill="none" stroke="#666" stroke-width="2.4" /></svg>
<svg class="ic" style="left:678px;top:87px" width="32" height="32" viewBox="0 0 32 32"><path d="M15 26.500H5.200A3 3 0 0 1 2.200 23.500V7.100A3 3 0 0 1 5.200 4.100H25.700A3 3 0 0 1 28.700 7.100V9" fill="none" stroke="#333" stroke-width="1.5" /><path d="M25.500 6.500L31.500 9L27.500 12.500L30 14L24 19L25.500 14.500L23 13Z" fill="#f4c21a" /><path d="M15.400 16.600L25.500 17.500L22.800 20.200L28.800 26.200L25 30L19 24L16.300 26.700Z" fill="#4d88c3" /></svg>
<svg class="ic" style="left:716px;top:87px" width="32" height="32" viewBox="0 0 32 32"><rect x="2.400" y="4.300" width="20.600" height="22.300" fill="#fbfbfb" stroke="#111" stroke-width="1.300"/><rect x="2.50" y="4.5" width="3.70" height="6.8" fill="#3a10e0"/><rect x="5.90" y="4.5" width="3.70" height="6.8" fill="#10a0b0"/><rect x="9.30" y="4.5" width="3.70" height="6.8" fill="#f010f0"/><rect x="12.70" y="4.5" width="3.70" height="6.8" fill="#30e020"/><rect x="16.10" y="4.5" width="3.70" height="6.8" fill="#f0c000"/><rect x="19.50" y="4.5" width="3.70" height="6.8" fill="#e01818"/><path d="M2.400 11.500H23" fill="none" stroke="#111" stroke-width="1" /><path d="M5.500 15.800H19M5.500 20.800H12" fill="none" stroke="#666" stroke-width="2.8" stroke-linecap="round"/><g transform="rotate(-42 22 21)"><rect x="12" y="17.500" width="11" height="8" rx="1.500" fill="#e8b800" stroke="#a88400" stroke-width="0.800"/><rect x="23" y="19.300" width="10" height="4.400" rx="2" fill="#f2c81a" stroke="#a88400" stroke-width="0.800"/><path d="M14.500 17.500V25.500M17.500 17.500V25.500M20.500 17.500V25.500" stroke="#a88400" stroke-width="0.800" fill="none"/></g></svg>
<svg class="ic" style="left:760px;top:87px" width="32" height="32" viewBox="0 0 32 32"><path d="M2.400 15.700L15.800 6.500V12.200C24 12.200 30.500 17 31.700 27.500C28.500 21.500 23.500 19.500 15.800 19.700V25Z" fill="#4d88c3" /></svg>
<svg class="ic" style="left:798px;top:87px" width="32" height="32" viewBox="0 0 32 32"><path d="M32.100 15.700L18.700 6.500V12.200C10.500 12.200 4 17 2.800 27.500C6 21.500 11 19.500 18.700 19.700V25Z" fill="#c9c9c9" /></svg>
<svg class="ic" style="left:842px;top:87px" width="32" height="32" viewBox="0 0 32 32"><rect x="7.400" y="3.500" width="19.200" height="6" rx="1.500" fill="#fbfbfb" stroke="#333" stroke-width="1.400"/><rect x="2.100" y="8.200" width="29.800" height="15.400" rx="2.500" fill="#fbfbfb" stroke="#333" stroke-width="1.500"/><rect x="7.400" y="19.200" width="19.200" height="11.300" rx="1.800" fill="#4d88c3" stroke="#2f5f94" stroke-width="1.300"/><path d="M10.500 23H23.500M10.500 26.500H23.500" stroke="#dbe8f5" stroke-width="1.500" fill="none"/></svg>
<svg class="ic" style="left:880px;top:87px" width="32" height="32" viewBox="0 0 32 32"><circle cx="16.5" cy="18" r="12.8" fill="#f6f6f6" stroke="#6a6a6a" stroke-width="1.500"/><ellipse cx="16.5" cy="18" rx="6.4" ry="12.8" fill="none" stroke="#6a6a6a" stroke-width="1.300"/><path d="M16.5 5.199999999999999V30.8 M3.6999999999999993 18H29.3 M5.235999999999999 11.856H27.764000000000003 M5.235999999999999 24.144H27.764000000000003" fill="none" stroke="#6a6a6a" stroke-width="1.3" /><path d="M8.500 12C11 7 15 5 19 5.500L17.500 2L29 7.500L21.500 14.500L20.500 10.500C16 9.500 12 10 8.500 12Z" fill="#4d88c3" /></svg>
<svg class="ic" style="left:918px;top:87px" width="32" height="32" viewBox="0 0 32 32"><circle cx="17.4" cy="18" r="12.8" fill="#f6f6f6" stroke="#6a6a6a" stroke-width="1.500"/><ellipse cx="17.4" cy="18" rx="6.4" ry="12.8" fill="none" stroke="#6a6a6a" stroke-width="1.300"/><path d="M17.4 5.199999999999999V30.8 M4.599999999999998 18H30.2 M6.1359999999999975 11.856H28.664 M6.1359999999999975 24.144H28.664" fill="none" stroke="#6a6a6a" stroke-width="1.3" /><path d="M27.500 3C29.500 8 28 13 24.500 16L27.500 18L14.500 20.500L17.500 8.500L20 12C23.500 10 26 7 27.500 3Z" fill="#4d88c3" /></svg>
<svg class="ic" style="left:962px;top:87px" width="32" height="32" viewBox="0 0 32 32"><path d="M4.500 1.700H27.500V32.200H4.500Z" fill="#fdfdfd" stroke="#d0214a" stroke-width="1.400"/><rect x="14" y="4.600" width="16" height="8.800" rx="1" fill="#d81e45"/><text x="22" y="12" text-anchor="middle" font-family="'Liberation Sans',sans-serif" font-weight="bold" font-size="7.500" fill="#fff">PDF</text><path d="M10.500 26.500C13 24 13.800 20.500 13.200 18.200C15 22 17.500 24 21.500 24.300C17.500 24 13.500 25 10.500 26.500Z" fill="none" stroke="#d0214a" stroke-width="1.3" /><circle cx="12.800" cy="17.800" r="1.100" fill="none" stroke="#d0214a" stroke-width="1"/><circle cx="21.800" cy="24.300" r="1.100" fill="none" stroke="#d0214a" stroke-width="1"/><circle cx="10.300" cy="26.700" r="1.100" fill="none" stroke="#d0214a" stroke-width="1"/></svg>
<svg class="ic" style="left:1000px;top:87px" width="32" height="32" viewBox="0 0 32 32"><rect x="2.300" y="3.700" width="29.200" height="25.700" rx="3.500" fill="#fbfbfb" stroke="#333" stroke-width="1.600"/><path d="M6 26.500L13.500 19L15.500 21L21.500 13L28.500 26.500Z" fill="#4d88c3" /><circle cx="8.700" cy="9.500" r="2" fill="#5b8ec2"/></svg>
<div class="sep" style="left:204px;top:88px;width:1px;height:32px;background:#c4c4c4"></div>
<div class="sep" style="left:438px;top:88px;width:1px;height:32px;background:#c4c4c4"></div>
<div class="sep" style="left:634px;top:88px;width:1px;height:32px;background:#c4c4c4"></div>
<div class="sep" style="left:754px;top:88px;width:1px;height:32px;background:#c4c4c4"></div>
<div class="sep" style="left:836px;top:88px;width:1px;height:32px;background:#c4c4c4"></div>
<div class="sep" style="left:956px;top:88px;width:1px;height:32px;background:#c4c4c4"></div>
<div class="gripv" style="left:8px;top:88px;height:30px"></div>
<div class="gripv" style="left:8px;top:130px;height:30px"></div>
<svg class="ic" style="left:15px;top:130px" width="32" height="32" viewBox="0 0 32 32"><path d="M3.500 21L15.700 28.700L28 21" fill="none" stroke="#686868" stroke-width="4.200" stroke-linejoin="round" stroke-linecap="round"/><path d="M3.500 15.300L15.700 23L28 15.300" fill="none" stroke="#f6f6f6" stroke-width="7" stroke-linejoin="round" stroke-linecap="round"/><path d="M3.500 15.300L15.700 23L28 15.300" fill="none" stroke="#686868" stroke-width="4.200" stroke-linejoin="round" stroke-linecap="round"/><path d="M3.500 10.300L15.700 2.300L27.800 9.500L15.700 17.700Z" fill="#4d88c3" stroke="#f6f6f6" stroke-width="6" stroke-linejoin="round"/><path d="M3.500 10.300L15.700 2.300L27.800 9.500L15.700 17.700Z" fill="#4d88c3" stroke="#4d88c3" stroke-width="3.200" stroke-linejoin="round"/></svg>
<div class="combo" style="left:50px;top:135px;width:250px"><svg class="ic" style="left:2px;top:2px" width="62" height="18" viewBox="0 0 62 18"><rect x="0.500" y="4.800" width="11.500" height="8" rx="2" fill="#8aa0bd"/><ellipse cx="6.300" cy="8.800" rx="5.300" ry="3.300" fill="#c9d6e6"/><ellipse cx="6.500" cy="8.800" rx="3.300" ry="3" fill="#27467a"/><circle cx="7.300" cy="8" r="0.900" fill="#e8eef5"/><path d="M14.300 8V5A3.300 3.300 0 0 1 21 5V9" fill="none" stroke="#c9a227" stroke-width="1.900"/><rect x="18.800" y="9" width="10.500" height="7.800" fill="#d8b13a" stroke="#9a7a14" stroke-width="0.900"/><path d="M19 11.500H29M19 14.200H29M24 9.300V16.500" stroke="#9a7a14" stroke-width="0.700"/><circle cx="36.500" cy="9.300" r="5.300" fill="#ffc400" stroke="#f7b500" stroke-width="1" stroke-dasharray="2.200 1.100"/><circle cx="36.500" cy="9.300" r="3" fill="#ffe000"/><rect x="46.600" y="5.200" width="9" height="9" fill="#fff" stroke="#000" stroke-width="1.200"/></svg><span class="ctx" style="left:68px">0</span><svg class="ic" style="left:236px;top:8px" width="10" height="6" viewBox="0 0 10 6"><path d="M0.800 0.500L5 4.800L9.200 0.500" fill="none" stroke="#444" stroke-width="1.200"/></svg></div>
<div class="sep" style="left:302px;top:131px;width:1px;height:30px;background:#c4c4c4"></div>
<div class="combo" style="left:306px;top:135px;width:121px"><svg class="ic" style="left:4px;top:6px" width="11" height="11" viewBox="0 0 11 11"><rect x="0.600" y="0.600" width="9.500" height="9.500" fill="#fff" stroke="#000" stroke-width="1.200"/></svg><span class="ctx" style="left:25px">ByLayer</span><svg class="ic" style="left:104px;top:8px" width="10" height="6" viewBox="0 0 10 6"><path d="M0.800 0.500L5 4.800L9.200 0.500" fill="none" stroke="#444" stroke-width="1.200"/></svg></div>
<div class="sep" style="left:428px;top:131px;width:1px;height:30px;background:#c4c4c4"></div>
<div class="combo" style="left:432px;top:135px;width:180px"><div style="position:absolute;left:3px;top:10px;width:62px;height:1px;background:#000"></div><span class="ctx" style="left:71px">ByLayer</span><svg class="ic" style="left:165px;top:8px" width="10" height="6" viewBox="0 0 10 6"><path d="M0.800 0.500L5 4.800L9.200 0.500" fill="none" stroke="#444" stroke-width="1.200"/></svg></div>
<svg class="ic" style="left:615px;top:130px" width="32" height="32" viewBox="0 0 32 32"><path d="M1.100 27H4.600M7.400 27H14.100M17.400 27H24.400M27.400 27H30.900" stroke="#5580ba" stroke-width="3.200" fill="none"/><path d="M10.900 27.300L10.400 21.200L18.300 5.800L25.300 8.800L16 25.900Z" fill="#f9c800" /><path d="M18.300 5.800L19.700 3A1.700 1.700 0 0 1 22 2.200L26.500 4.300A1.700 1.700 0 0 1 27.300 6.500L25.300 8.800Z" fill="#c21f2a" /></svg>
<style>.ctx{position:absolute;top:3px;font-family:"Liberation Serif","Noto Serif CJK SC",serif;font-size:12px;line-height:15px;letter-spacing:-0.1px;white-space:nowrap;color:#000;will-change:transform;-webkit-text-stroke:0.25px #000}</style>
<svg class="ic" style="left:8px;top:8px" width="17" height="16" viewBox="0 0 17 16"><path d="M3.300 9.300L4.800 1.800L7 1.200L8.200 6L9.300 1.200L11.500 1.200L13 9.300Z" fill="#22a08e"/><path d="M6.200 8.500L10.500 2.500" stroke="#7fe0d0" stroke-width="0.900" fill="none"/><path d="M0.600 13.300C5.500 13.500 11 12.500 15.800 9.600C16 12 15.500 14 14.500 15.200H2.500Z" fill="#1f9c8c"/><path d="M1.500 11.500C6 11.500 11 10.500 14.500 8.800" stroke="#a8e8dc" stroke-width="0.800" fill="none"/></svg>
<svg class="ic" style="left:1020px;top:5px" width="115" height="20" viewBox="0 0 115 20"><path d="M6 10.500H16" stroke="#000" stroke-width="1" fill="none" shape-rendering="crispEdges"/><rect x="51.500" y="5.500" width="9" height="9" stroke="#000" stroke-width="1" fill="none" shape-rendering="crispEdges"/><path d="M97.200 5.200L106.800 14.800M106.800 5.200L97.200 14.800" stroke="#000" stroke-width="1.100" fill="none"/></svg>
<div class="gripv" style="left:6px;top:36px;height:15px;width:2px"></div>
<svg class="ic" style="left:0;top:58px" width="1145" height="25" viewBox="0 0 1145 25"><path d="M8.500 23.500L27.500 5.800Q29 4.500 31 4.500H100.500Q103 4.500 103 7V23.500Z" fill="#f4f4f4" stroke="#8a8a8a" stroke-width="1"/><path d="M103.500 23.500V7.500Q103.500 4.500 106.500 4.500H176L160 23.500Z" fill="#f4f4f4" stroke="#8a8a8a" stroke-width="1"/><path d="M0 23.500H160.500L176.500 5.500Q177.500 4.500 179 4.500H278.500Q281.500 4.500 281.500 7.500V23.500H1145" fill="none" stroke="#7a7a7a" stroke-width="1"/><path d="M161 24L177 5.500Q178 5 179 5H278.500Q281 5 281 7.500V25H160Z" fill="#ffffff"/><path d="M282.500 8V23" stroke="#c8c8c8" stroke-width="1" fill="none"/><text x="31" y="18" class="tt">MxCAD云图</text><text x="109.500" y="18" class="tt">MxCloud1</text><text x="180.500" y="18" class="tt" font-weight="bold" letter-spacing="0.6">Drawing1.mxg*</text><path d="M1110.500 6.500V15.500L1105.500 11Z M1118.500 6.500V15.500L1123.500 11Z" fill="none" stroke="#000" stroke-width="1"/><path d="M1131 7.500L1138 14.500M1138 7.500L1131 14.500" stroke="#000" stroke-width="1.800" fill="none"/></svg>
<div class="abs" style="left:83px;top:760px;width:16px;height:18px;background:#fafafa;border:1px solid #d0d0d0"></div>
<div class="abs" style="left:98px;top:760px;width:17px;height:18px;background:#fafafa;border:1px solid #d0d0d0"></div>
<svg class="ic" style="left:83px;top:759px" width="180" height="20" viewBox="0 0 180 20"><path d="M12 4.500V14.500L6.500 9.500Z M20.500 4.500V14.500L26 9.500Z" fill="#7a7a7a"/><path d="M32.500 1L39.500 18.500H72.500L79.500 1Z" fill="#fff"/><path d="M32.500 1L39.500 18.500H72.500L79.500 1" fill="none" stroke="#111" stroke-width="1"/><path d="M72.500 18.500L75 12M79.500 18H118M118 1L124.500 18.500H164.500L171.500 1M118.500 18.500L122 9" fill="none" stroke="#111" stroke-width="1"/><text x="44" y="14.500" class="tt">模型</text><text x="82.500" y="14.500" class="tt">布局1</text><text x="128.500" y="14.500" class="tt">布局2</text></svg>
<div class="abs" style="left:1125px;top:783px;width:17px;height:33px;background:#f0f0f0"></div>
<div class="abs" style="left:1055px;top:818px;width:69px;height:18px;background:#f0f0f0"></div>
<div class="abs" style="left:1124px;top:817px;width:21px;height:20px;background:#f0f0f0"></div>
<div class="abs" style="left:1142px;top:781px;width:3px;height:56px;background:#f0f0f0"></div>
<div class="abs" style="left:1070px;top:819px;width:17px;height:16px;background:#cdcdcd"></div>
<svg class="ic" style="left:1055px;top:783px" width="90" height="54" viewBox="0 0 90 54"><path d="M74.500 11.500L78 8L81.500 11.500M74.500 23L78 26.500L81.500 23" fill="none" stroke="#444" stroke-width="1.500"/><path d="M8.500 40L5 43.500L8.500 47M59.500 40L63 43.500L59.500 47" fill="none" stroke="#444" stroke-width="1.500"/></svg>
<div class="abs" style="left:1070px;top:840px;width:72px;height:18px;background:#fafafa"></div>
<svg class="ic" style="left:1073px;top:841px" width="18" height="16" viewBox="0 0 18 16"><path d="M0.500 14.500L3.500 1.500L7.500 1L9 6L10.500 1L14.500 1L17 14.500H13L12 8L10 14.500H7L5.500 8.500L4.500 14.500Z" fill="#1fa08c"/><path d="M2 12.500L13 3M6 14.500L10.500 9" stroke="#e6f7f3" stroke-width="0.900" fill="none"/></svg>
<style>.tt{font-family:"Liberation Sans","Noto Sans CJK SC",sans-serif;font-size:12px;fill:#000}</style>
<div class="st" style="left:1093.500px;z-index:3;letter-spacing:0.4px">MxCAD</div>
</body></html>
